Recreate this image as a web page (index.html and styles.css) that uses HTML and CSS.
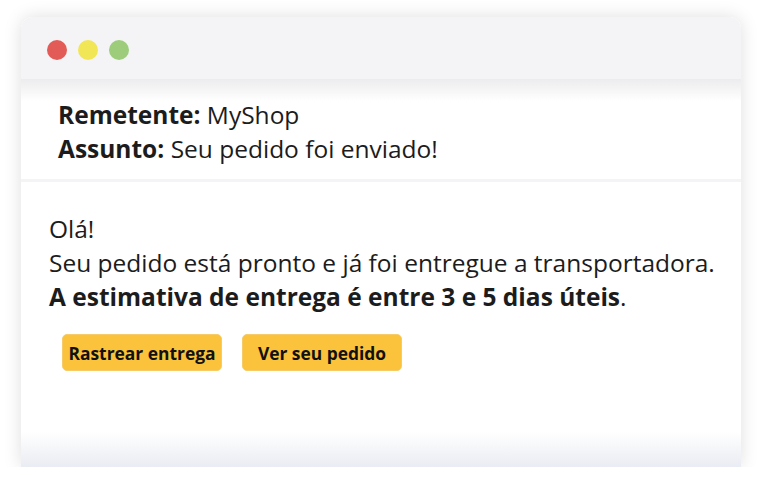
FILE: index.html
```html
<!DOCTYPE html>
<html lang="pt-BR">
<head>
    <meta charset="UTF-8">
    <meta name="viewport" content="width=device-width, initial-scale=1.0">
    <title>Seu pedido foi enviado</title>
    <link rel="stylesheet" href="styles.css">
</head>
<body>
    <div class="frame">
        <div class="window">
            <div class="titlebar">
                <span class="dot red"></span>
                <span class="dot yellow"></span>
                <span class="dot green"></span>
            </div>

            <div class="mail-head">
                <p><b>Remetente:</b> MyShop</p>
                <p><b>Assunto:</b> Seu pedido foi enviado!</p>
            </div>

            <div class="mail-body">
                <p>Olá!</p>
                <p>Seu pedido está pronto e já foi entregue a transportadora.</p>
                <p><b>A estimativa de entrega é entre 3 e 5 dias úteis</b>.</p>

                <div class="actions">
                    <button type="button">Rastrear entrega</button>
                    <button type="button">Ver seu pedido</button>
                </div>
            </div>
        </div>
    </div>
</body>
</html>
```

FILE: styles.css
```css
body {
    margin: 0;
    background: #fff;
    font-family: "Open Sans", Arial, sans-serif;
    color: #1c1c1c;
}

.frame {
    height: 467px;
    overflow: hidden;
    padding: 17px 25px 0 21px;
    box-sizing: border-box;
}

.window {
    height: 450px;
    border-radius: 12px 12px 0 0;
    background: linear-gradient(to bottom, #fff 415px, #e9ecf2 450px);
    box-shadow: 0 0 18px rgba(0, 0, 0, 0.13);
    overflow: hidden;
}

.titlebar {
    height: 58px;
    background-color: #f4f4f6;
    display: flex;
    align-items: center;
    gap: 11px;
    padding: 4px 0 0 26px;
}

.dot {
    width: 20px;
    height: 20px;
    border-radius: 50%;
}

.red { background-color: #e25b57; }
.yellow { background-color: #f1e655; }
.green { background-color: #9dcd7b; }

.mail-head {
    padding: 19px 0 13px 37px;
    background: linear-gradient(to bottom, #ececee 0, #fff 22px);
    border-bottom: 3px solid #f4f4f6;
}

.mail-head p,
.mail-body p {
    margin: 0;
    font-size: 24.5px;
    line-height: 34px;
}

.mail-body {
    padding: 30px 0 0 28px;
}

.actions {
    display: flex;
    gap: 20px;
    margin: 20px 0 0 13px;
}

.actions button {
    width: 160px;
    height: 37px;
    padding: 0;
    border: 1px solid #f7cc68;
    border-radius: 5px;
    background-color: #fbc23b;
    font-family: "Open Sans", Arial, sans-serif;
    font-weight: 700;
    font-size: 17.4px;
    color: #111;
    cursor: pointer;
}
```
